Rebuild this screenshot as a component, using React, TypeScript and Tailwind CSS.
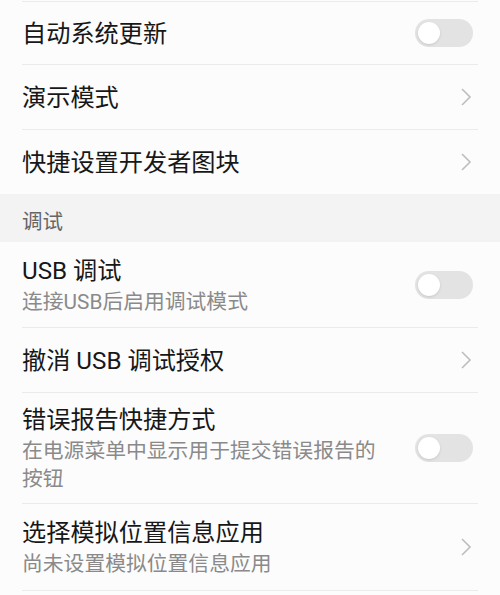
import React from "react";

type Row = {
  title: string;
  sub?: string;
  kind: "toggle" | "chevron";
  h: string;
};

const topRows: Row[] = [
  { title: "自动系统更新", kind: "toggle", h: "h-[63px]" },
  { title: "演示模式", kind: "chevron", h: "h-[65px]" },
  { title: "快捷设置开发者图块", kind: "chevron", h: "h-[65px]" },
];

const debugRows: Row[] = [
  { title: "USB 调试", sub: "连接USB后启用调试模式", kind: "toggle", h: "h-[86px]" },
  { title: "撤消 USB 调试授权", kind: "chevron", h: "h-[65px]" },
  {
    title: "错误报告快捷方式",
    sub: "在电源菜单中显示用于提交错误报告的按钮",
    kind: "toggle",
    h: "h-[111px]",
  },
  { title: "选择模拟位置信息应用", sub: "尚未设置模拟位置信息应用", kind: "chevron", h: "h-[87px]" },
];

function Toggle() {
  return (
    <div className="flex h-[28px] w-[58px] items-center rounded-full bg-[#e3e3e3] px-[3px]">
      <div className="h-[22px] w-[22px] rounded-full bg-white shadow-sm" />
    </div>
  );
}

function Chevron() {
  return (
    <svg width="12" height="20" viewBox="0 0 12 20" className="mr-[1px]">
      <path d="M2 2 L10 10 L2 18" fill="none" stroke="#bdbdbd" strokeWidth="1.6" />
    </svg>
  );
}

function SettingRow({ row }: { row: Row }) {
  return (
    <div className={`mx-[22px] flex ${row.h} items-center justify-between border-b border-[#ebebeb]`}>
      <div className="max-w-[368px] pt-[2px]">
        <div className="text-[24.2px] leading-[30px] text-[#171717]">{row.title}</div>
        {row.sub && (
          <div className="mt-[2px] text-[20.8px] leading-[28px] text-[#8a8a8a]">{row.sub}</div>
        )}
      </div>
      <div className="mr-[5px]">{row.kind === "toggle" ? <Toggle /> : <Chevron />}</div>
    </div>
  );
}

export default function App() {
  return (
    <div
      className="h-[595px] w-[500px] overflow-hidden bg-[#fcfcfc]"
      style={{ fontFamily: '"Roboto", "Noto Sans CJK SC", sans-serif' }}
    >
      <div className="mx-[22px] h-[2px] border-b border-[#ebebeb]" />
      {topRows.map((r) => (
        <SettingRow key={r.title} row={r} />
      ))}
      <div className="-mt-px flex h-[48px] items-center bg-[#f3f3f3] px-[22px] pt-[9px] text-[20.5px] text-[#666666]">
        调试
      </div>
      {debugRows.map((r) => (
        <SettingRow key={r.title} row={r} />
      ))}
    </div>
  );
}
